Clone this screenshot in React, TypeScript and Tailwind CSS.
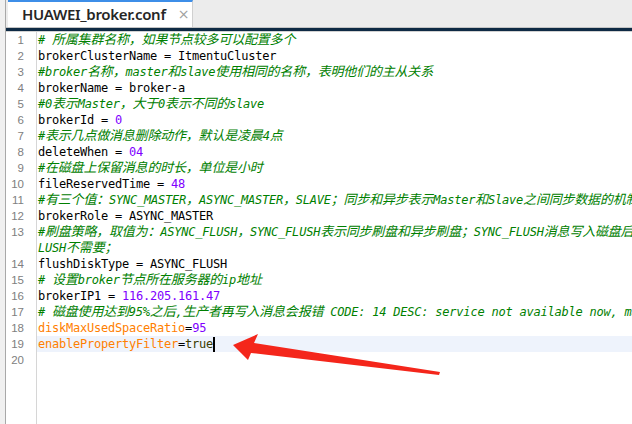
import React from "react";

type Tok = { t: string; c?: string };

const CMT = "text-[#008000] italic";
const NUM = "text-[#8000ff]";
const KEY = "text-[#ff8000]";

const cjk = /([\u3000-\u303f\u4e00-\u9fff\uff00-\uffef]+)/;

// wrap CJK runs so they keep the wider editor advance
const Seg: React.FC<{ text: string }> = ({ text }) => {
  return (
    <>
      {text.split(cjk).map((part, i) =>
        cjk.test(part) ? (
          <span key={i} className="text-[13px] tracking-[-0.2px]">
            {part}
          </span>
        ) : (
          <React.Fragment key={i}>{part}</React.Fragment>
        )
      )}
    </>
  );
};

const rows: { n?: number; toks: Tok[]; active?: boolean }[] = [
  { n: 1, toks: [{ t: "# 所属集群名称，如果节点较多可以配置多个", c: CMT }] },
  { n: 2, toks: [{ t: "brokerClusterName = ItmentuCluster" }] },
  { n: 3, toks: [{ t: "#broker名称，master和slave使用相同的名称，表明他们的主从关系", c: CMT }] },
  { n: 4, toks: [{ t: "brokerName = broker-a" }] },
  { n: 5, toks: [{ t: "#0表示Master，大于0表示不同的slave", c: CMT }] },
  { n: 6, toks: [{ t: "brokerId = " }, { t: "0", c: NUM }] },
  { n: 7, toks: [{ t: "#表示几点做消息删除动作，默认是凌晨4点", c: CMT }] },
  { n: 8, toks: [{ t: "deleteWhen = " }, { t: "04", c: NUM }] },
  { n: 9, toks: [{ t: "#在磁盘上保留消息的时长，单位是小时", c: CMT }] },
  { n: 10, toks: [{ t: "fileReservedTime = " }, { t: "48", c: NUM }] },
  {
    n: 11,
    toks: [{ t: "#有三个值：SYNC_MASTER，ASYNC_MASTER，SLAVE；同步和异步表示Master和Slave之间同步数据的机制；", c: CMT }],
  },
  { n: 12, toks: [{ t: "brokerRole = ASYNC_MASTER" }] },
  {
    n: 13,
    toks: [
      {
        t: "#刷盘策略，取值为：ASYNC_FLUSH，SYNC_FLUSH表示同步刷盘和异步刷盘；SYNC_FLUSH消息写入磁盘后才返回成功状态，ASYNC_F",
        c: CMT,
      },
    ],
  },
  { toks: [{ t: "LUSH不需要；", c: CMT }] },
  { n: 14, toks: [{ t: "flushDiskType = ASYNC_FLUSH" }] },
  { n: 15, toks: [{ t: "# 设置broker节点所在服务器的ip地址", c: CMT }] },
  { n: 16, toks: [{ t: "brokerIP1 = " }, { t: "116.205.161.47", c: NUM }] },
  {
    n: 17,
    toks: [{ t: "# 磁盘使用达到95%之后,生产者再写入消息会报错 CODE: 14 DESC: service not available now, maybe disk full", c: CMT }],
  },
  { n: 18, toks: [{ t: "diskMaxUsedSpaceRatio", c: KEY }, { t: "=" }, { t: "95", c: NUM }] },
  { n: 19, toks: [{ t: "enablePropertyFilter", c: KEY }, { t: "=" }, { t: "true", c: "text-[#3b3b00]" }], active: true },
  { n: 20, toks: [] },
];

const Tab = () => {
  return (
    <div className="ml-[2px] flex h-[27px] w-[185px] items-center border-t-2 border-r border-[#3d8ee8] border-r-[#d0d0d0] bg-white pl-[14px]">
      <span className="text-[15px] font-semibold tracking-[-0.3px] text-[#262626] [font-family:'Noto_Sans',sans-serif]">
        HUAWEI_broker.conf
      </span>
      <span className="ml-[12px] text-[14px] text-[#a0a0a0] [font-family:'DejaVu_Sans',sans-serif]">×</span>
    </div>
  );
};

export default function App() {
  return (
    <div className="relative flex h-[424px] w-[632px] overflow-hidden bg-white">
      <div className="w-[6px] shrink-0 border-r border-[#a8a8a8] bg-[#f0f0f0]" />
      <div className="flex min-w-0 flex-1 flex-col">
        <div className="flex h-[27px] bg-[#ececec]">
          <Tab />
        </div>
        <div className="h-px bg-[#c4c4c4]" />
        <div className="h-[3px] bg-[#0e2a44]" />
        <div className="h-px bg-[#d2d2d2]" />
        <div className="flex-1 text-[12px] tracking-[-0.22px] [font-family:'DejaVu_Sans_Mono','Noto_Sans_CJK_SC',monospace]">
          {rows.map((r, i) => (
            <div key={i} className="flex h-[16px] leading-[16px]">
              <div className="w-[31px] shrink-0 border-r border-[#d6d6d6] pr-[12px] text-right text-[11.5px] tracking-normal text-[#808080] [font-family:'Liberation_Sans',sans-serif]">
                {r.n ?? ""}
              </div>
              <div
                className={`min-w-0 flex-1 overflow-hidden whitespace-pre pl-px text-black ${
                  r.active ? "bg-[#eef3fc]" : ""
                }`}
              >
                {r.toks.map((tk, j) => (
                  <span key={j} className={tk.c}>
                    <Seg text={tk.t} />
                  </span>
                ))}
                {r.active && <span className="inline-block h-[15px] w-[2px] bg-black align-middle" />}
              </div>
            </div>
          ))}
          <div className="flex h-full">
            <div className="w-[31px] shrink-0 border-r border-[#d6d6d6]" />
          </div>
        </div>
      </div>
      <svg className="pointer-events-none absolute inset-0" width="632" height="424">
        <polygon points="233,345 258,334 254,343 440,372 439,375 251,353 248,360" fill="#f4261b" />
      </svg>
    </div>
  );
}
